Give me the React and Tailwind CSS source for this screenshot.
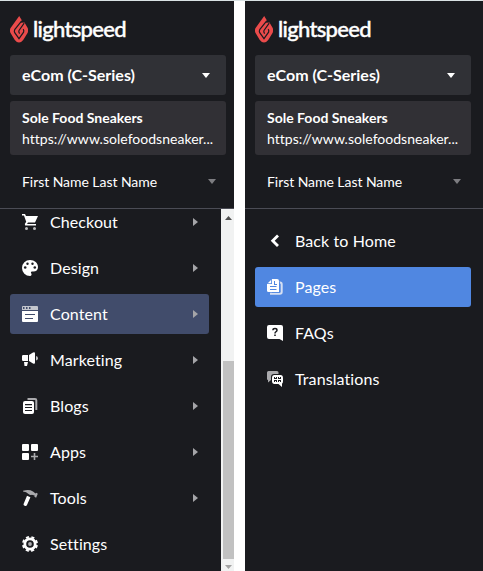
import React from 'react';

function FlameIcon() {
  return (
    <svg viewBox="0 0 18 27" className="h-[27px] w-[18px]">
      <path d="M9.200 0l2.600 4.200-1 2.600 3.700-.3 3.200 5.500q.8 2.400 0 4.800l-4.500 7.200Q9 29 4.800 24L.4 16.800q-.9-2.400 0-4.600z" fill="#ea4b4b" />
      <path d="M11.700 4.800L4.700 13.700q-.8 1.500 0 3l4.300 6 4.600-6.500q.6-1.500-.4-3M14.200 7.200L9 14.500q-.7 1.200.6 3.200" fill="none" stroke="#1a1b1f" strokeWidth="1.200" />
    </svg>
  );
}

function CartIcon() {
  return (
    <svg viewBox="0 0 16 16" className="size-4" fill="white">
      <path d="M0 0h3l1 2h12l-3 6.500H6L5 10h9v1.600H3.200L2.800 10l1.400-2.200L2 1.600H0z" />
      <circle cx="4.500" cy="14.400" r="1.500" fill="#bdbdbf" />
      <circle cx="12.500" cy="14.400" r="1.500" fill="#bdbdbf" />
    </svg>
  );
}

function PaletteIcon() {
  return (
    <svg viewBox="0 0 16 16" className="size-4" fill="white">
      <path d="M8 0c4.500 0 8 3 8 7 0 3-2 4.500-4.500 4.500H10c-1 0-1.400 1-.8 1.800C10 14.500 9.500 16 8 16a8 8 0 0 1 0-16z" />
      <g fill="#1b1c20">
        <circle cx="3.200" cy="7.500" r="1.300" />
        <circle cx="5.500" cy="3.700" r="1.200" />
        <circle cx="10.500" cy="3.700" r="1.200" />
        <circle cx="12.800" cy="7.500" r="1.300" />
      </g>
    </svg>
  );
}

function ContentIcon() {
  return (
    <svg viewBox="0 0 16 16" className="size-4">
      <path d="M1 0h14a1 1 0 0 1 1 1v3H0V1a1 1 0 0 1 1-1z" fill="#c4c6cd" />
      <path d="M1 1h1.500v2H1zM4 1h1.500v2H4zM7 1h1.500v2H7z" fill="#414c6b" />
      <path d="M0 5h16v10a1 1 0 0 1-1 1H1a1 1 0 0 1-1-1z" fill="white" />
      <path d="M3 8h10v1H3zM3 12h8v1H3z" fill="#414c6b" />
    </svg>
  );
}

function MegaphoneIcon() {
  return (
    <svg viewBox="0 0 16 16" className="size-4" fill="white">
      <path d="M1.200 3H6v6H1.200A1.200 1.200 0 0 1 0 7.800V4.200A1.200 1.200 0 0 1 1.200 3zM2 10h4l-1 4H2.500zM7 3l4-2.500Q13-.5 13 1.500v9q0 2-2 1L7 9z" />
      <path d="M14 4q2 .5 2 2.200T14 8.500z" fill="#bdbdbf" />
    </svg>
  );
}

function BlogsIcon() {
  return (
    <svg viewBox="0 0 16 16" className="size-4">
      <path d="M5.500 1H13q1.300 0 1.300 1.300V12" fill="none" stroke="#aaaaad" strokeWidth="2" />
      <rect x="1" y="3" width="11" height="13" rx="2" fill="white" />
      <path d="M3 6h7v1.200H3zM3 9h7v1H3zM3 12h7v1H3z" fill="#1b1c20" />
    </svg>
  );
}

function AppsIcon() {
  return (
    <svg viewBox="0 0 16 16" className="size-4" fill="white">
      <rect width="7" height="7" rx="1" />
      <rect x="9" width="7" height="7" rx="1" />
      <rect y="9" width="7" height="7" rx="1" />
      <path d="M11.700 9h1.600v2.700H16v1.600h-2.700V16h-1.600v-2.700H9v-1.600h2.700z" fill="#aaaaad" />
    </svg>
  );
}

function HammerIcon() {
  return (
    <svg viewBox="0 0 16 16" className="size-4">
      <path d="M1 .8Q7-1 11 1.500l2.500 2 .8-.7 1.500 1-1.700 4-1.700-1 .2-1.300-2.800-.8Q8.500 5.800 6.500 4 4.500 1.800 1 1.500z" fill="#aaaaad" />
      <path d="M5 5.700l3.400 1.600L5 15q-.7 1.400-2.300.8t-1-2z" fill="white" />
    </svg>
  );
}

function GearIcon() {
  return (
    <svg viewBox="0 0 16 16" className="size-4">
      <circle cx="8" cy="8" r="5.200" fill="none" stroke="white" strokeWidth="2.800" />
      <circle cx="8" cy="8" r="7.100" fill="none" stroke="white" strokeWidth="1.800" strokeDasharray="3.100 2.477" strokeDashoffset="-1.200" />
      <circle cx="8" cy="8" r="1.900" fill="#aaaaad" />
    </svg>
  );
}

function BackIcon() {
  return (
    <svg viewBox="0 0 16 16" className="size-4">
      <path d="M11 2.500L5.700 7.800l5.300 5.300" fill="none" stroke="white" strokeWidth="2.800" />
    </svg>
  );
}

function PagesIcon() {
  return (
    <svg viewBox="0 0 16 16" className="size-4">
      <path d="M12.500 3.500h.5q1.700 0 1.700 1.700V13q0 1.800-1.800 1.800H4V13" fill="none" stroke="#d5dff2" strokeWidth="2" />
      <path d="M5 0h5a2 2 0 0 1 2 2v11H1.500A1.500 1.500 0 0 1 0 11.500V5z" fill="white" />
      <path d="M5 0v5H0v-.8h4.200V0zM7 2h1v3h2v1H7zM3 7h6.500v1H3zM3 10h6.500v1H3zM12 3h.8v11H3v-.8h9z" fill="#5087e1" />
    </svg>
  );
}

function FaqIcon() {
  return (
    <svg viewBox="0 0 16 16" className="size-4">
      <path d="M2 0h12a2 2 0 0 1 2 2v14l-3.500-2H2a2 2 0 0 1-2-2V2a2 2 0 0 1 2-2z" fill="white" />
      <path d="M5.900 5.200Q6 3.500 8 3.500t2 1.700Q10 6.200 8.800 6.800 8 7.200 8 8.500" fill="none" stroke="#1b1c20" strokeWidth="1.500" />
      <rect x="7.200" y="9.500" width="1.600" height="1.500" fill="#1b1c20" />
    </svg>
  );
}

function TranslateIcon() {
  return (
    <svg viewBox="0 0 16 16" className="size-4">
      <path d="M1.500 0H10a1.500 1.500 0 0 1 1.500 1.500V3H7Q4 3 4 6v3l-3 2.500V9Q0 9 0 8V1.500A1.500 1.500 0 0 1 1.500 0z" fill="#aaaaad" />
      <path d="M7.500 4h6Q16 4 16 7v3q0 2-1 2.800V16l-3.500-3h-4Q5 13 5 10V7q0-3 2.500-3z" fill="white" />
      <path d="M7 6h3v2H7zM11 6h3v2h-3zM7 9h3v2H7zM11 9h3v2h-3z" fill="#1b1c20" />
      <path d="M8 6h1v1H8zM12 6h1v1h-1zM8 10h1v1H8zM12 10h1v1h-1z" fill="white" />
    </svg>
  );
}

const menu = [
  { label: 'Checkout', icon: CartIcon, arrow: true },
  { label: 'Design', icon: PaletteIcon, arrow: true },
  { label: 'Content', icon: ContentIcon, arrow: true, active: 'bg-[#414c6b]' },
  { label: 'Marketing', icon: MegaphoneIcon, arrow: true },
  { label: 'Blogs', icon: BlogsIcon, arrow: true },
  { label: 'Apps', icon: AppsIcon, arrow: true },
  { label: 'Tools', icon: HammerIcon, arrow: true },
  { label: 'Settings', icon: GearIcon },
];

const contentMenu = [
  { label: 'Back to Home', icon: BackIcon },
  { label: 'Pages', icon: PagesIcon, active: 'bg-[#5087e1]' },
  { label: 'FAQs', icon: FaqIcon },
  { label: 'Translations', icon: TranslateIcon },
];

function MenuItem({ item }) {
  const Icon = item.icon;
  return (
    <a className={`flex h-10 shrink-0 items-center rounded-[3px] pr-[11px] pl-3 ${item.active || ''}`}>
      <Icon />
      <span className="ml-3 flex-1 text-base tracking-[0.1px]">{item.label}</span>
      {item.arrow && (
        <svg viewBox="0 0 5 8" className="h-2 w-[5px]">
          <path d="M0 0l5 4-5 4z" fill="#a5a5a8" />
        </svg>
      )}
    </a>
  );
}

function Header() {
  return (
    <header className="h-[208px] shrink-0 border-b border-[#4b4c55] pl-[10px]">
      <div className="flex h-[54px] items-center pt-[2px]">
        <FlameIcon />
        <span className="ml-[5px] text-[22px] leading-none font-medium tracking-[-0.7px] [-webkit-text-stroke:0.4px_white]">
          lightspeed
        </span>
      </div>
      <div className="flex h-10 w-54 items-center justify-between rounded-[3px] bg-[#303136] pr-4 pl-3">
        <span className="text-base font-bold">eCom (C-Series)</span>
        <svg viewBox="0 0 8 5" className="h-[5px] w-2">
          <path d="M0 0h8L4 5z" fill="white" />
        </svg>
      </div>
      <div className="mt-[6px] h-[54px] w-54 rounded-[3px] bg-[#313035] px-3 pt-[6px] text-sm leading-[21px]">
        <div className="font-bold">Sole Food Sneakers</div>
        <div className="tracking-[0.02px] whitespace-nowrap">https://www.solefoodsneaker...</div>
      </div>
      <div className="flex h-[53px] w-54 items-center justify-between pr-[10px] pl-3">
        <span className="text-sm tracking-[-0.05px]">First Name Last Name</span>
        <svg viewBox="0 0 8 5" className="h-[5px] w-2">
          <path d="M0 0h8L4 5z" fill="#7d7d81" />
        </svg>
      </div>
    </header>
  );
}

function Scrollbar() {
  return (
    <div className="flex w-[13px] flex-col bg-[#f1f2f2] pl-[2px]">
      <div className="flex h-[152px] justify-center pt-[7px]">
        <svg viewBox="0 0 7 4" className="h-1 w-[7px]">
          <path d="M3.500 0L7 4H0z" fill="#505050" />
        </svg>
      </div>
      <div className="h-[198px] bg-[#c1c1c1]" />
      <div className="flex flex-1 justify-center pt-[6px]">
        <svg viewBox="0 0 7 4" className="h-1 w-[7px]">
          <path d="M0 0h7L3.500 4z" fill="#a3a3a3" />
        </svg>
      </div>
    </div>
  );
}

export default function App() {
  return (
    <div className="flex h-[571px] w-[483px] justify-between overflow-hidden border-t border-[#d9e2e4] bg-white font-['Lato',sans-serif] text-white">
      <aside className="flex w-[234px] flex-col bg-[#1a1b1f]">
        <Header />
        <div className="flex min-h-0 flex-1">
          <nav className="flex flex-1 flex-col justify-end gap-[6px] overflow-hidden pr-3 pb-[7px] pl-[10px]">
            {menu.map((item) => (
              <MenuItem key={item.label} item={item} />
            ))}
          </nav>
          <Scrollbar />
        </div>
      </aside>
      <aside className="flex w-[238px] flex-col bg-[#1a1b1f]">
        <Header />
        <nav className="flex flex-col gap-[6px] pt-3 pr-3 pl-[10px]">
          {contentMenu.map((item) => (
            <MenuItem key={item.label} item={item} />
          ))}
        </nav>
      </aside>
    </div>
  );
}
